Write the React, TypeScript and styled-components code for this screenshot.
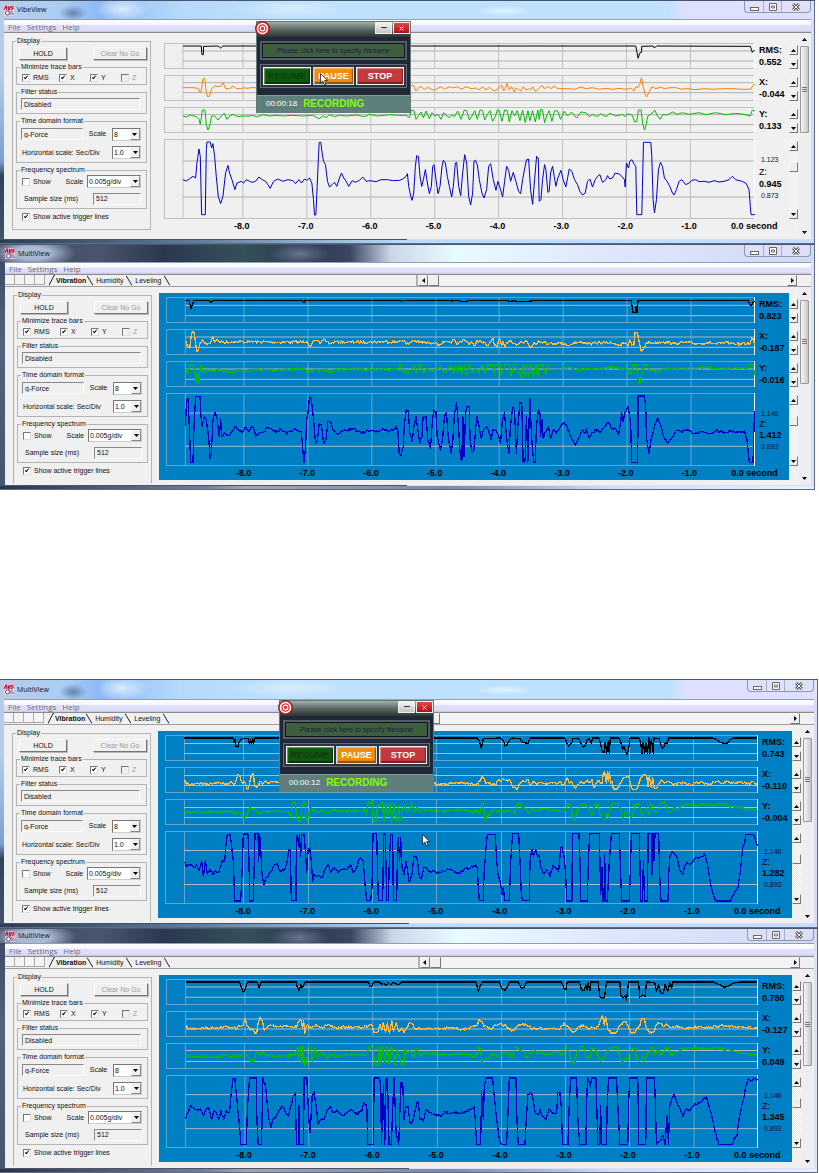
import React, { useId } from "react";
import styled, { createGlobalStyle, css } from "styled-components";

const UI = `"Liberation Sans", Arial, sans-serif`;
const CHROME = `"Open Sans", "Noto Sans", sans-serif`;

const Global = createGlobalStyle`
  *, *::before, *::after { box-sizing: border-box; }
  body { margin: 0; background: #fff; font-family: ${UI}; font-size: 7px; line-height: 8px; color: #111; }
  button, input, select { font: inherit; color: inherit; margin: 0; padding: 0; border-radius: 0; }
`;

/* ---------- recorded signals ---------- */

/* Samples come in three strips; each strip is "x,y x,y ..." from its own start. */
type Strips = [string, string, string];
const STRIP_START = [0, 750, 1620];

interface Band {
  name: string;
  value: string;
  color: string;
  top: number;
  height: number;
  lines: number[];
  data: Strips;
  limits?: [string, string];
}

interface Recording {
  x0: number;
  x1: number;
  start: number;
  grid: number[];
  fuzz: number;
  bands: Band[];
}

const vibe: Recording = {
  x0: 493, x1: 2268, start: 550, fuzz: 0,
  grid: [730, 922, 1114, 1306, 1498, 1690, 1882, 2074],
  bands: [
    { name: "RMS", value: "0.552", color: "#000", top: 130, height: 78, lines: [154, 184], data: [
      "550,139 605,139 607,165 611,165 612,140 655,139 663,145 670,139",
      "0,139 860,139",
      "0,139 290,139 297,176 302,160 307,158 308,140 342,139 346,145 352,139 634,140 640,158 648,150"] },
    { name: "X", value: "-0.044", color: "#ff8000", top: 227, height: 78, lines: [250, 280], data: [
      "550,265 580,265 595,267 602,280 606,270 609,240 615,236 620,280 624,292 630,290 636,268 645,260 662,262 670,250 678,268 690,268 700,260 710,268 725,268 735,265 745,268",
      "0,265 20,265 480,266 485,258 492,258 500,275 508,265 515,262 525,270 535,264 550,272 560,270 575,262 585,270 600,262 610,266 625,262 635,270 650,262 665,268 680,266 690,272 700,262 710,272 720,264 735,275 745,270 750,262 758,258 763,275 768,268 773,252 780,272 787,262 795,278 800,266 808,270 815,275 822,262 830,272 838,268 845,272 850,262 858,276 865,270",
      "0,265 8,258 15,268 25,262 35,268 45,260 55,268 75,268 90,268 105,270 125,263 140,268 160,265 180,270 200,267 220,270 240,267 262,270 275,266 284,275 290,262 296,265 302,255 307,235 312,262 318,285 322,293 330,278 338,262 350,268 365,263 375,268 395,265 410,265 430,270 445,267 465,271 500,268 520,270 550,268 580,268 610,270 630,270 636,268 642,258 648,255"] },
    { name: "Y", value: "0.133", color: "#00c000", top: 323, height: 78, lines: [346, 376], data: [
      "550,350 560,353 572,347 590,352 598,360 602,375 606,350 608,332 616,332 620,375 625,392 630,380 636,350 645,350 655,362 665,350 674,342 682,360 690,350 700,345 715,352 730,350",
      "0,350 10,348 20,353 40,346 60,350 80,348 100,350 130,348 160,350 190,348 208,358 222,350 230,355 240,346 255,352 270,348 290,350 320,347 345,352 360,345 385,350 420,346 450,348 470,348 480,355 486,332 494,334 500,360 508,348 515,338 522,356 530,335 540,358 548,340 556,350 565,345 575,360 583,340 590,348 600,355 608,346 615,352 625,335 635,360 645,332 652,334 660,362 668,350 676,334 684,360 692,332 700,334 706,362 714,345 722,334 730,366 738,352 744,332 750,334 758,366 766,332 774,334 780,368 788,334 796,350 804,334 812,364 820,332 828,370 836,334 842,364 850,334 858,368 866,332",
      "0,360 4,330 10,332 16,370 24,345 30,334 38,366 46,335 55,334 64,360 75,336 85,350 97,338 112,356 125,338 140,340 150,352 160,345 172,352 185,343 200,352 212,342 230,350 250,345 258,352 265,343 280,348 286,368 293,366 298,332 306,332 311,375 316,392 320,380 326,350 335,345 347,332 355,350 363,360 372,345 385,347 400,338 415,345 430,340 450,345 480,340 500,346 530,340 560,346 590,342 615,345 633,350 640,332 648,335"] },
    { name: "Z", value: "0.945", color: "#0000c8", top: 418, height: 240, lines: [484, 592], limits: ["1.123", "0.873"], data: [
      "550,540 560,544 570,537 580,530 588,535 592,490 598,448 602,470 606,645 617,645 620,450 622,427 632,427 636,445 640,432 645,470 650,530 656,590 663,612 670,590 678,520 685,497 690,520 697,540 706,570 712,550 725,545 732,550 740,540",
      "0,545 8,548 18,545 28,532 38,540 48,545 55,555 62,566 72,545 85,538 100,545 115,540 130,543 138,552 148,540 156,550 165,538 172,542 180,535 187,550 192,600 195,646 199,646 203,560 207,470 209,428 214,428 218,460 222,485 228,495 234,545 240,562 248,555 255,548 262,560 270,535 276,520 283,535 290,545 298,560 308,543 318,548 330,542 340,532 350,545 362,543 380,546 395,540 415,540 430,543 450,542 460,538 470,530 474,522 478,560 484,590 488,602 493,580 498,500 502,468 507,470 512,530 517,560 522,540 528,510 534,550 540,582 546,560 550,500 554,495 560,540 566,582 572,560 578,500 582,482 588,490 594,530 600,560 607,592 612,560 618,490 622,488 628,560 634,588 640,520 646,465 652,490 658,590 664,616 670,580 674,485 678,482 684,495 690,540 698,580 704,595 712,570 718,500 724,492 732,540 740,572 746,545 754,570 760,592 766,545 772,500 778,512 784,545 792,518 800,545 808,575 814,582 820,540 826,508 832,480 838,478 844,570 850,614 856,540 862,470 867,475",
      "0,605 5,600 10,540 16,495 20,510 26,578 30,575 34,520 40,500 45,530 50,560 56,535 65,512 72,540 80,562 86,530 90,508 98,515 106,540 115,555 122,575 130,586 138,580 145,545 152,538 160,562 168,540 175,530 182,525 190,548 200,540 205,528 212,538 220,535 228,520 240,523 248,530 256,540 258,562 262,490 268,505 272,485 278,480 284,492 290,500 293,645 308,645 310,560 313,428 335,428 338,470 342,600 346,640 352,600 358,510 364,488 370,500 376,535 384,545 392,560 400,580 405,586 412,570 420,545 428,540 440,555 450,550 458,542 470,540 480,546 495,545 510,548 525,543 540,547 555,545 570,540 580,530 590,540 600,543 610,545 622,552 630,570 634,620 636,645 648,645"] },
  ],
};

const multiA: Recording = {
  x0: 496, x1: 2264, start: 554, fuzz: 8,
  grid: [730, 922, 1114, 1306, 1496, 1688, 1880, 2072],
  bands: [
    { name: "RMS", value: "0.823", color: "#000", top: 171, height: 78, lines: [196, 227], data: [
      "554,181 565,181 571,205 577,190 578,181 625,181 630,187 640,181",
      "0,181 155,181 160,187 163,181 450,181 455,185 460,181 600,181 604,185 608,181 625,181 630,185 650,184 655,181 770,181 776,185 790,182 800,185 830,184 850,182 860,181",
      "0,181 272,181 278,218 285,218 287,200 290,218 293,181 622,181 632,198 642,182"] },
    { name: "X", value: "-0.187", color: "#ffb840", top: 268, height: 78, lines: [292, 323], data: [
      "554,305 562,320 567,325 573,280 580,278 585,310 588,335 593,333 598,312 605,300 612,310 628,312 636,290 642,308 650,300 660,308 700,306 745,307",
      "0,306 80,308 160,307 170,305 178,320 186,308 198,303 208,312 220,298 230,306 240,312 255,306 300,308 400,306 440,307 450,302 460,303 468,315 480,308 490,302 505,308 540,310 555,308 562,316 580,308 600,309 612,300 620,315 630,305 640,300 650,305 656,315 664,308 672,318 680,303 700,310 710,318 720,308 727,296 733,318 740,320 747,295 753,318 758,305 763,322 772,310 780,304 800,314 812,306 820,310 828,302 835,318 845,322 850,308 858,315 864,303",
      "0,306 15,307 25,312 50,310 75,312 85,318 100,309 130,308 150,313 180,309 220,311 240,316 255,310 262,320 268,300 274,316 280,318 284,278 291,278 296,305 303,335 310,325 320,308 340,310 370,306 400,312 430,308 470,312 500,309 530,313 560,309 590,313 620,312 630,311 634,295 640,298 643,320"] },
    { name: "Y", value: "-0.016", color: "#00c000", top: 364, height: 78, lines: [388, 419], data: [
      "554,390 562,400 570,374 578,376 583,400 586,425 590,400 594,430 600,378 604,380 608,398 618,396 628,390 640,395 650,388 665,395 680,392 695,398 710,390 740,395",
      "0,390 80,391 155,388 160,382 168,400 175,394 190,390 205,395 225,388 240,398 255,390 300,388 370,389 440,388 448,375 456,398 462,390 470,402 480,396 490,378 498,400 508,374 520,400 530,385 540,396 550,390 570,378 580,398 590,392 600,376 610,400 615,378 622,398 628,376 634,405 640,374 648,405 656,376 665,398 675,388 685,400 695,378 705,398 712,374 725,376 732,404 738,374 748,374 752,408 758,398 764,374 776,376 782,410 790,374 800,374 806,400 812,415 818,376 822,414 828,374 834,414 840,374 848,412 856,376 862,414 866,374",
      "0,374 8,376 16,400 24,374 30,392 50,388 90,384 110,390 140,386 170,388 200,384 230,382 245,390 258,386 268,405 274,395 278,374 288,376 290,400 295,430 300,428 304,400 310,376 320,374 328,390 340,396 355,398 365,388 400,386 440,387 500,384 560,388 600,386 620,387 630,374 637,376 643,405"] },
    { name: "Z", value: "1.412", color: "#0000c8", top: 460, height: 218, lines: [520, 619], limits: ["1.146", "0.893"], data: [
      "554,560 558,480 562,475 566,560 570,667 577,667 580,560 585,470 598,470 601,530 605,560 612,530 617,540 624,590 628,655 632,640 637,540 643,518 650,540 656,590 660,540 664,590 672,580 685,588 695,572 705,560 715,572 725,578 735,560 745,575",
      "0,566 4,560 8,562 15,588 28,578 40,575 52,562 70,575 90,570 110,580 130,568 145,575 152,575 156,620 160,668 165,620 168,540 172,520 177,470 182,478 188,530 195,610 200,605 206,552 212,555 220,612 226,600 232,545 240,545 248,570 260,582 280,572 308,568 335,580 350,570 375,578 400,568 415,575 430,568 437,560 442,575 446,640 452,645 458,620 462,550 467,510 473,512 478,580 485,605 490,560 496,530 502,570 508,610 514,590 518,530 526,530 532,600 540,625 546,540 550,510 556,515 560,590 570,630 576,600 582,530 588,520 594,600 602,640 607,600 612,520 618,490 624,560 630,655 634,665 637,530 641,650 645,520 650,500 656,500 659,600 664,635 670,630 676,560 680,530 686,560 692,595 700,570 708,560 715,575 722,600 728,568 735,570 745,590 750,610 756,540 762,520 768,590 775,640 780,560 786,505 792,510 798,640 802,560 808,490 814,490 818,665 824,660 828,530 832,667 838,475 844,600 850,667 854,667 858,560 864,510 868,515",
      "0,590 5,540 8,595 16,575 24,560 30,595 38,570 48,580 60,560 70,548 80,560 88,585 96,600 105,615 115,595 125,570 132,580 138,568 145,592 155,578 170,570 182,575 195,560 202,550 215,565 225,568 234,585 240,550 244,520 248,545 252,525 258,510 263,500 268,530 271,560 274,667 292,667 293,469 312,469 316,500 318,590 325,640 332,600 340,570 345,550 352,535 360,555 368,585 380,608 392,600 400,585 412,570 420,575 440,572 460,580 480,575 510,580 530,570 545,578 570,574 590,576 612,574 620,600 624,640 627,667 638,667 641,560 643,515"] },
  ],
};

const multiB: Recording = {
  x0: 493, x1: 2272, start: 551, fuzz: 8,
  grid: [728, 922, 1114, 1306, 1502, 1694, 1886, 2078],
  bands: [
    { name: "RMS", value: "0.743", color: "#000", top: 181, height: 78, lines: [205, 236], data: [
      "551,190 697,190 700,205 703,193 706,216 712,217 716,200 722,192 742,192 747,208 749,195",
      "3,206 6,192 9,206 12,190 550,190 680,190 686,200 692,220 698,192 750,190 758,200 764,214 770,208 778,195 785,190 808,192 815,203 825,205 832,206 838,190 860,190",
      "0,190 73,190 78,205 84,214 92,205 97,192 112,190 120,205 128,217 134,212 140,195 145,192 152,205 156,190 175,190 180,210 185,232 190,235 194,200 198,236 203,200 206,236 209,190 235,190 240,200 246,225 250,215 255,232 260,240 265,215 268,190 295,190 300,205 304,236 308,200 312,236 316,205 320,237 325,190 328,235 332,195 338,235 340,190 355,192 360,210 364,223 370,215 374,205 380,205 383,190 515,190 525,193 540,204 552,206 562,205 568,195 580,190 650,190"] },
    { name: "X", value: "-0.110", color: "#ffb840", top: 277, height: 78, lines: [301, 332], data: [
      "551,320 565,330 590,325 620,328 650,322 670,328 685,328 692,320 700,332 707,315 712,298 718,305 724,325 730,320 740,345 746,330",
      "0,310 4,298 8,296 12,335 20,338 28,320 35,330 45,318 55,325 65,322 85,323 200,322 400,326 550,326 580,328 620,324 660,328 680,327 688,320 694,303 700,310 705,325 712,322 722,330 735,332 742,318 755,315 765,318 778,317 785,335 792,336 798,345 806,328 820,320 830,314 840,330 850,322 860,330",
      "0,324 20,328 45,325 60,322 68,330 74,322 80,308 86,325 92,320 98,335 104,340 112,330 120,320 130,325 140,315 148,325 154,315 160,338 168,325 176,318 184,326 188,295 192,292 197,325 200,292 203,320 206,290 210,325 214,320 218,343 230,343 238,325 245,315 255,308 262,302 268,320 275,345 288,345 295,325 300,310 308,300 318,303 322,335 326,303 332,338 336,310 341,342 348,342 355,325 362,316 372,325 382,320 395,328 420,325 450,330 480,322 510,328 530,320 545,326 560,320 580,325 600,320 620,328 640,322 650,327"] },
    { name: "Y", value: "-0.004", color: "#00c000", top: 374, height: 78, lines: [398, 428], data: [
      "551,412 565,415 585,410 610,415 640,410 660,415 690,410 700,420 712,412 722,420 730,430 738,425 745,402",
      "0,400 15,408 25,420 35,412 55,410 80,408 95,412 115,411 120,432 124,390 128,384 134,385 138,430 142,440 150,440 153,400 158,386 163,386 167,440 172,430 178,400 190,410 205,415 215,405 230,415 250,408 280,412 310,408 335,412 342,402 348,420 352,388 358,384 365,386 368,440 378,440 380,395 388,390 395,386 400,440 406,388 412,425 418,388 424,440 430,386 438,440 444,395 448,440 455,405 462,390 470,412 478,402 485,388 492,415 500,398 508,415 515,405 540,408 580,410 620,406 660,410 682,408 688,418 694,385 698,390 703,432 710,425 718,424 725,408 745,412 770,410 785,405 792,420 800,385 808,388 815,400 825,405 835,418 845,402 855,410",
      "0,404 20,408 40,405 60,412 75,406 82,388 90,390 96,425 103,440 108,410 114,405 120,390 130,388 138,395 148,412 156,420 162,390 172,391 178,420 186,430 192,434 198,415 204,428 210,395 222,386 235,387 240,408 248,435 256,405 264,415 270,430 276,420 284,388 295,390 305,430 312,415 318,400 325,420 330,388 338,408 348,415 360,388 375,386 380,410 390,412 400,400 410,405 425,392 450,390 470,395 490,388 510,392 540,388 560,392 580,400 600,401 620,405 635,402 650,410"] },
    { name: "Z", value: "1.282", color: "#0000c8", top: 470, height: 219, lines: [529, 631], limits: ["1.146", "0.893"], data: [
      "551,565 560,575 572,570 580,580 588,570 595,590 603,560 608,605 614,560 620,600 628,585 636,600 645,590 655,592 665,560 672,560 676,510 680,480 688,480 692,505 698,560 702,680 720,680 724,600 728,479 742,479 745,560 747,680",
      "1,680 8,678 13,478 22,478 24,560 27,480 30,520 34,600 40,630 46,610 54,600 62,590 70,575 80,568 86,590 94,590 104,580 110,560 114,525 119,528 122,678 136,678 137,490 140,480 144,515 146,480 150,545 153,480 160,480 165,540 168,595 172,530 177,520 182,560 186,620 190,600 200,605 215,610 225,580 232,570 240,595 250,578 262,595 275,585 290,584 300,572 308,595 318,580 325,555 330,550 338,560 344,640 348,678 360,678 364,640 367,478 378,478 380,560 383,678 396,678 399,478 404,480 408,678 413,678 416,560 420,480 426,480 428,678 438,678 440,560 443,490 447,560 450,490 454,580 460,600 466,560 476,625 484,600 490,545 498,546 505,600 512,615 520,580 530,585 540,595 550,588 560,598 575,588 595,587 610,590 625,598 640,585 660,580 675,572 680,580 683,640 686,678 698,678 700,600 706,520 710,480 734,480 738,560 742,600 748,620 754,660 758,640 762,678 776,678 780,560 786,478 804,478 808,560 812,660 815,678 836,678 838,560 844,525 848,545 855,525 860,545 866,545",
      "0,580 10,598 18,585 28,608 36,575 45,580 54,590 60,520 64,515 70,545 75,600 78,680 94,680 95,478 115,478 118,560 120,680 140,680 143,560 146,500 148,478 176,478 180,660 184,580 186,680 190,680 192,540 195,680 200,680 203,620 206,560 212,478 236,478 240,600 243,680 266,680 270,560 272,478 296,478 300,680 306,680 308,560 312,680 321,680 322,478 332,478 334,600 337,478 340,560 343,478 354,478 357,600 361,680 382,680 384,600 388,545 394,530 402,540 410,550 418,590 426,600 432,575 440,565 450,570 460,555 475,548 492,540 498,560 505,600 512,640 520,665 525,680 570,680 575,665 586,650 592,640 598,600 606,520 612,505 616,480 638,480 644,495 651,515"] },
  ],
};

const multiC: Recording = {
  x0: 497, x1: 2275, start: 556, fuzz: 8,
  grid: [734, 926, 1118, 1312, 1505, 1697, 1889, 2083],
  bands: [
    { name: "RMS", value: "0.780", color: "#000", top: 178, height: 77, lines: [202, 232], data: [
      "556,187 718,187 724,205 730,217 736,205 742,187 749,187",
      "20,187 27,204 33,187 138,187 142,205 147,213 152,195 155,205 160,198 165,187 355,187 360,200 367,198 370,187 390,187 395,195 400,188 408,197 415,188 422,195 430,188 445,195 455,187 678,187 685,215 692,195 698,187 748,187 755,205 765,212 773,200 778,187 805,187 815,205 822,203 830,187 860,187",
      "0,187 65,187 72,205 78,210 82,187 118,187 125,210 132,213 138,195 142,212 145,190 150,213 152,187 175,187 180,230 188,235 194,232 200,187 240,187 243,225 250,235 255,228 260,240 266,187 296,187 300,232 308,225 316,230 320,187 345,188 350,215 356,195 362,218 370,222 376,195 384,215 390,190 396,205 398,187 520,187 540,195 552,202 565,200 580,190 600,187 653,187"] },
    { name: "X", value: "-0.127", color: "#ffb840", top: 274, height: 78, lines: [298, 328], data: [
      "556,320 565,328 590,326 630,325 670,322 700,323 708,330 715,318 722,320 728,318 735,298 742,320 749,330",
      "0,331 8,328 14,340 20,335 24,310 30,293 38,310 42,332 48,325 60,316 80,320 105,318 120,322 140,321 146,305 152,300 157,325 160,302 164,340 170,318 185,325 200,316 215,322 240,318 260,325 290,322 330,324 355,320 360,315 366,318 372,338 382,338 390,315 395,332 400,308 406,338 412,310 418,340 425,302 430,335 438,310 445,335 455,325 462,338 470,325 478,308 488,312 495,328 520,326 560,327 600,325 640,328 675,322 682,318 687,299 696,305 702,320 712,322 722,330 735,316 755,313 765,316 775,325 785,335 795,330 805,318 820,312 835,320 845,330 860,326",
      "0,324 20,328 40,325 60,326 72,310 80,320 90,325 100,338 112,325 130,316 140,322 148,330 155,320 165,325 175,320 182,300 188,288 194,318 197,290 204,328 215,340 228,340 235,325 245,312 258,305 268,328 275,342 285,340 292,325 300,320 306,296 314,296 320,325 330,340 342,338 348,318 355,308 362,312 370,320 380,312 390,322 400,321 440,326 480,320 510,325 540,318 570,322 610,320 640,326 653,325"] },
    { name: "Y", value: "0.049", color: "#00c000", top: 370, height: 79, lines: [394, 425], data: [
      "556,410 570,412 600,410 640,412 680,408 720,412 738,405 745,415",
      "2,428 12,425 18,400 25,398 32,408 38,395 45,405 55,408 80,410 110,408 135,409 140,385 145,420 150,380 155,430 158,380 164,438 170,430 173,380 180,385 186,425 194,385 200,410 210,400 222,402 230,418 240,408 270,409 300,405 330,408 350,405 355,390 362,380 370,390 373,438 384,438 386,380 393,430 398,380 404,430 410,382 417,432 424,380 430,400 434,438 440,390 448,410 455,438 462,436 466,385 472,405 480,390 488,415 500,388 510,412 520,400 560,404 600,406 650,402 672,412 680,405 686,380 692,395 696,430 705,420 715,418 725,405 745,410 765,400 778,402 785,415 792,395 800,382 812,395 822,400 832,415 842,400 850,388 860,402",
      "0,402 20,405 45,395 60,400 66,410 72,390 80,382 88,395 94,420 100,432 106,425 112,395 120,382 130,380 140,415 150,412 155,384 165,388 172,405 182,425 190,415 200,400 210,385 225,382 235,384 240,415 248,430 256,415 262,425 268,400 275,385 285,388 292,420 300,425 308,410 315,425 322,405 330,395 338,382 346,405 355,390 365,410 378,382 388,390 395,410 405,395 420,394 440,386 470,385 500,388 530,384 560,390 590,398 620,402 650,405"] },
    { name: "Z", value: "1.345", color: "#0000c8", top: 467, height: 219, lines: [526, 628], limits: ["1.146", "0.893"], data: [
      "556,600 562,580 570,560 578,565 585,570 592,572 600,568 610,590 616,570 625,565 634,600 640,575 648,580 655,600 662,575 670,600 678,575 688,580 692,530 698,478 704,478 710,540 716,600 722,676 738,676 742,560 748,476",
      "0,476 18,476 20,600 24,676 34,676 37,520 38,476 46,500 50,545 56,600 62,625 68,600 78,590 88,570 98,562 106,580 115,590 122,560 130,530 135,520 139,676 144,676 146,560 149,676 160,676 162,476 170,476 176,600 180,640 186,530 192,518 198,560 204,615 212,600 222,601 230,575 240,562 250,580 260,572 275,588 290,580 305,572 320,585 335,575 342,550 350,560 353,676 370,676 372,476 388,476 392,500 394,676 400,500 404,676 408,480 412,476 417,676 424,676 428,560 432,476 438,640 446,676 450,560 453,490 458,490 462,600 468,560 474,561 480,610 488,605 496,570 504,545 510,600 520,605 528,570 540,580 550,585 570,590 585,578 600,582 625,580 640,582 660,570 672,562 676,600 680,676 692,676 695,520 700,600 703,500 708,476 728,476 734,540 740,600 748,660 755,676 770,676 775,560 778,476 798,476 801,600 805,676 825,676 829,600 834,525 840,520 848,530 855,575 866,588",
      "0,570 8,590 18,600 28,570 40,580 50,581 54,520 60,520 64,560 68,676 84,676 88,560 92,476 110,476 114,600 120,676 138,676 140,560 143,476 152,500 155,476 168,476 172,600 174,676 180,676 182,560 186,676 200,676 202,560 206,476 230,476 234,560 240,676 264,676 266,560 270,476 294,476 297,676 318,676 320,476 344,476 347,560 350,676 370,650 376,676 382,590 386,676 390,560 396,540 403,525 412,550 422,570 430,592 438,570 450,575 460,560 475,550 490,540 500,532 508,560 516,590 524,630 532,660 538,676 578,676 584,655 592,650 598,600 606,560 612,540 618,500 626,478 634,485 645,478 653,480"] },
  ],
};

/* Joins the strips and roughens sloping stretches with repeatable noise. */
function tracePath(data: Strips, fuzz: number) {
  let seed = 7;
  const noise = () => {
    seed = (seed * 16807) % 2147483647;
    return seed / 2147483647 - 0.5;
  };
  const pts = data.flatMap((strip, i) =>
    strip.split(" ").map((p) => {
      const [x, y] = p.split(",").map(Number);
      return [x + STRIP_START[i], y];
    })
  );
  let d = `M${pts[0][0]} ${pts[0][1]}`;
  for (let i = 1; i < pts.length; i++) {
    const [ax, ay] = pts[i - 1];
    const [bx, by] = pts[i];
    if (fuzz && ay !== by && bx - ax > 5) {
      for (let x = ax + 3; x < bx - 1; x += 3) {
        const y = ay + ((by - ay) * (x - ax)) / (bx - ax) + noise() * fuzz;
        d += `L${x} ${y.toFixed(1)}`;
      }
    }
    d += `L${bx} ${by}`;
  }
  return d;
}

/* ---------- window frame ---------- */

type Skin = "sky" | "night";

const Page = styled.main`
  display: flex;
  flex-direction: column;
  width: 100%;
`;

const Pair = styled.section<{ $right: number }>`
  display: flex;
  flex-direction: column;
  margin-right: ${(p) => p.$right}px;
  & + & { margin-top: 189px; }
`;

const skyTitle = css`
  background:
    radial-gradient(ellipse 14px 8px at 73px 12px, #57719bcc, transparent),
    radial-gradient(ellipse 26px 12px at 122px 8px, #e8f6ffcc, transparent),
    radial-gradient(ellipse 60px 9px at 290px 8px, #d9f0f8cc, transparent),
    radial-gradient(ellipse 30px 5px at 505px 10px, #e4faffcc, transparent),
    linear-gradient(90deg, #b9cbe6 0, #a9cdf4 8%, #8fb9f5 12%, #b5d9fb 22%, #bfe0ff 36%, #bfe0ff 82%, #dfdfff 84%, #dfdfff 100%);
`;
const nightTitle = css`
  background:
    radial-gradient(ellipse 44px 16px at 32px 8px, #a9b8d4 40%, transparent),
    radial-gradient(ellipse 30px 12px at 300px 9px, #77829fcc, transparent),
    linear-gradient(90deg, #3c465c 0, #4b566e 12%, #2b3850 20%, #35505a 30%, #2c3850 38%, #3c4662 43%, #c9d6e8 48%, #e8fbff 56%, #dfe6fb 75%, #d3d8f4 100%);
`;

const Frame = styled.article<{ $skin: Skin; $edge: number }>`
  position: relative;
  border-top: 1px solid #48566e;
  padding: 0 4px 5px ${(p) => p.$edge}px;
  background: ${(p) =>
    p.$skin === "sky"
      ? "linear-gradient(90deg, #2c3c54 0, #62809e 25%, #b9dcfb 50%, #c9dcff 100%) bottom / 100% 4px no-repeat, linear-gradient(90deg, transparent 50%, #d5dcfa 50%), linear-gradient(#b5ccec 30%, #7da0cf 66%, #33405a 72%, #43536c)"
      : "linear-gradient(90deg, #2a3348 0, #777e90 25%, #a9a2a8 30%, #7a8aa8 55%, #d5dcf6 75%, #e9efff 100%) bottom / 100% 4px no-repeat, linear-gradient(90deg, transparent 50%, #dbe0f8 50%), linear-gradient(#3c4862, #54627c 40%, #465670)"};
  box-shadow: inset -1px -1px 0 #5d6c84;
`;

const TitleBar = styled.header<{ $skin: Skin; $height: number; $edge: number }>`
  display: flex;
  justify-content: space-between;
  height: ${(p) => p.$height}px;
  margin: 0 -3px 0 -${(p) => p.$edge}px;
  padding: 0 3px 0 ${(p) => p.$edge}px;
  font: 7px/${(p) => p.$height - 2}px ${CHROME};
  color: #101018;
  ${(p) => (p.$skin === "sky" ? skyTitle : nightTitle)}
`;

const Caption = styled.h1`
  display: flex;
  align-items: center;
  gap: 3px;
  margin: 0;
  font: inherit;
`;

const CaptionButtons = styled.div`
  display: flex;
  height: 12px;
  border: 1px solid #8c98b4;
  border-top: 0;
  border-radius: 0 0 4px 4px;
  background: #dfe2f6aa;
  overflow: hidden;
`;

const CaptionButton = styled.button<{ $wide?: boolean }>`
  width: ${(p) => (p.$wide ? 29 : 18)}px;
  border: 0;
  border-left: 1px solid #a5b0c8;
  background: none;
  display: grid;
  place-items: center;
  &:first-child { border-left: 0; }
`;

const MenuBar = styled.nav<{ $height: number }>`
  display: flex;
  gap: 6px;
  height: ${(p) => p.$height}px;
  padding-left: 4px;
  border-top: 1px solid #8fa0b0;
  border-bottom: 1px solid #8a8a90;
  background: linear-gradient(#fff 0, #f4f6fb 40%, #dfdffb 45%, #dfdffb 80%, #c8c8d4 100%);
`;

const MenuItem = styled.button`
  border: 0;
  background: none;
  font: 8px/11px ${CHROME};
  color: #6c6c74;
`;

const TabStrip = styled.div`
  display: flex;
  height: 12px;
  background: #f0f0f0;
  border-bottom: 1px solid #a0a0a0;
`;

const TabSide = styled.div`
  flex: 0 0 51%;
  display: flex;
`;

const NavCell = styled.button`
  width: 10px;
  height: 10px;
  border: 0;
  border-right: 1px solid #a8a8a8;
  border-bottom: 1px solid #a8a8a8;
  background: #f4f4f4;
`;

const TabList = styled.div`
  display: flex;
  gap: 1px;
  margin-left: 4px;
`;

const Tab = styled.button<{ $active?: boolean }>`
  display: flex;
  align-items: center;
  gap: 1px;
  height: 11px;
  border: 0;
  background: none;
  font-weight: ${(p) => (p.$active ? "bold" : "normal")};
`;

const HScroll = styled.div`
  flex: 1;
  display: flex;
  height: 11px;
  margin-right: 14px;
  border-left: 2px solid #b0b0b0;
  background: repeating-conic-gradient(#fff 0 25%, #eaeaea 0 50%) 0 0 / 2px 2px;
`;

const Bevel = styled.button<{ $w?: number; $h?: number }>`
  width: ${(p) => p.$w ?? 9}px;
  height: ${(p) => p.$h ?? 10}px;
  flex: none;
  display: grid;
  place-items: center;
  border: 1px solid;
  border-color: #f6f6f6 #777 #777 #f6f6f6;
  background: #efefef;
`;

const LevelThumb = styled(Bevel)`
  margin-top: 11px;
`;

const Spacer = styled.span`
  flex: 1;
`;

const Client = styled.div`
  display: flex;
  padding: 0 2px 0 8px;
  background: #f0f0f0;
  overflow: hidden;
`;

/* ---------- settings panel ---------- */

const Group = styled.fieldset<{ $open?: boolean }>`
  margin: 0;
  padding: 0;
  min-width: 0;
  border: 1px solid #b4b4b4;
  ${(p) => p.$open && "border-bottom-color: transparent;"}
`;

const Legend = styled.legend`
  margin-left: 3px;
  padding: 0 1px;
  line-height: 8px;
`;

const Settings = styled.form<{ $height: number }>`
  flex: 0 0 139px;
  height: ${(p) => p.$height}px;
  padding-top: 4px;
`;

const Stack = styled.div`
  display: flex;
  flex-direction: column;
  gap: 3px;
  padding: 2px 3px 5px;
`;

const Row = styled.div<{ $h: number; $pad?: number }>`
  display: flex;
  align-items: center;
  justify-content: space-between;
  height: ${(p) => p.$h}px;
  padding: 0 5px 0 ${(p) => p.$pad ?? 4}px;
`;

const ButtonRow = styled.div`
  display: flex;
  justify-content: space-between;
  padding-left: 3px;
`;

const PushButton = styled.button<{ $w: number }>`
  width: ${(p) => p.$w}px;
  height: 13px;
  border: 1px solid;
  border-color: #fafafa #777 #777 #fafafa;
  background: #f0f0f0;
  box-shadow: 1px 1px 0 #b8b8b8;
  &:disabled { color: #9a9a9a; }
`;

const CheckLabel = styled.label<{ $off?: boolean }>`
  display: inline-flex;
  align-items: center;
  gap: 3px;
  color: ${(p) => (p.$off ? "#a0a0a0" : "#111")};
`;

const Tick = styled.input`
  appearance: none;
  position: relative;
  width: 8px;
  height: 8px;
  border: 1px solid;
  border-color: #777 #ddd #ddd #777;
  background: #fff;
  &:disabled { background: #f0f0f0; }
  &:checked::after {
    content: "";
    position: absolute;
    left: 2px;
    top: 0;
    width: 2px;
    height: 4px;
    border: solid #000;
    border-width: 0 1px 1px 0;
    transform: rotate(40deg);
  }
`;

const Checks = styled.div`
  display: grid;
  grid-template-columns: 37px 31px 31px 20px;
  align-items: center;
  height: 13px;
  padding-left: 5px;
`;

const Sunken = styled.input<{ $w: string }>`
  width: ${(p) => p.$w};
  height: 12px;
  padding: 0 2px;
  border: 1px solid;
  border-color: #888 #fafafa #fafafa #888;
  background: #f0f0f0;
  line-height: 10px;
  outline: 0;
`;

const SelectBox = styled.span<{ $w: number }>`
  position: relative;
  display: inline-flex;
  width: ${(p) => p.$w}px;
  height: 13px;
  border: 1px solid;
  border-color: #777 #ccc #ccc #777;
  background: #fff;
  select {
    flex: 1;
    min-width: 0;
    padding-left: 1px;
    border: 0;
    background: none;
    appearance: none;
    line-height: 11px;
    outline: 0;
  }
`;

const Arrow = styled.span`
  display: grid;
  place-items: center;
  width: 10px;
  border: 1px solid;
  border-color: #f6f6f6 #888 #888 #f6f6f6;
  background: #efefef;
  pointer-events: none;
`;

const Filter = styled.div`
  height: 17px;
  padding: 2px 6px 0 4px;
`;

const LastRow = styled.div`
  padding: 1px 0 1px 6px;
`;

/* ---------- chart ---------- */

const Chart = styled.div<{ $blue: boolean }>`
  flex: 1;
  min-width: 0;
  align-self: flex-start;
  display: flex;
  flex-direction: column;
  gap: 6px;
  margin: 6px 0 0 7px;
  padding: 4px 0 0 ${(p) => (p.$blue ? 7 : 6)}px;
  background: ${(p) => (p.$blue ? "#0080c4" : "transparent")};
`;

const BandRow = styled.div<{ $h: number }>`
  display: flex;
  height: ${(p) => p.$h}px;
  svg { flex: 1; min-width: 0; height: 100%; }
`;

const Readout = styled.dl<{ $tall: boolean; $lh: number }>`
  flex: 0 0 34px;
  margin: 0;
  padding: ${(p) => (p.$tall ? 15 : 1)}px 0 0 4px;
  font: 9px/${(p) => p.$lh}px ${UI};
  color: #000;
  dt { font-weight: ${(p) => (p.$tall ? "normal" : "bold")}; }
  dd { margin: 0; font-weight: bold; white-space: nowrap; }
`;

const Limit = styled.div`
  padding-left: 2px;
  font-size: 7px;
  color: #10102c;
`;

const Axis = styled.div`
  display: grid;
  grid-template-columns: 46fr repeat(8, 64fr) 34fr 34px;
  margin-top: -6px;
  font: bold 9px/14px ${UI};
  color: #000;
  text-align: center;
`;

const AxisEnd = styled.span`
  grid-column: 10 / 12;
  padding-left: 10px;
  text-align: left;
  white-space: nowrap;
`;

const Spins = styled.div`
  flex: 0 0 9px;
  display: flex;
  flex-direction: column;
  gap: 6px;
  padding-top: 10px;
`;

const SpinPair = styled.div<{ $h: number; $track?: boolean }>`
  display: flex;
  flex-direction: column;
  justify-content: space-between;
  height: ${(p) => p.$h}px;
  padding-top: 2px;
  ${(p) => p.$track && "background: repeating-conic-gradient(#fff 0 25%, #e8e8e8 0 50%) 0 0 / 2px 2px;"}
`;

const VScroll = styled.div`
  flex: 0 0 10px;
  display: flex;
  flex-direction: column;
  align-items: center;
  margin-left: 1px;
  padding: 4px 0;
  background: #eeeef0;
`;

const VThumb = styled.span`
  flex: 0 0 44%;
  width: 9px;
  margin: 4px 0 auto;
  display: grid;
  place-items: center;
  border: 1px solid #9a9a9a;
  border-radius: 1px;
  background: linear-gradient(90deg, #f4f4f4, #dcdcdc 60%, #c4c4c4);
`;

/* ---------- recorder dialog ---------- */

const Recorder = styled.section<{ $left: number; $top: number }>`
  position: absolute;
  left: ${(p) => p.$left}px;
  top: ${(p) => p.$top}px;
  width: 155px;
  border: 1px solid #65787a;
  background: #202836;
`;

const RecorderTitle = styled.header`
  display: flex;
  justify-content: flex-end;
  gap: 1px;
  height: 15px;
  background: linear-gradient(#9fb0aa, #55625f 55%, #2a3634);
`;

const Target = styled.svg`
  position: absolute;
  left: -2px;
  top: -1px;
`;

const MiniButton = styled.button<{ $red?: boolean }>`
  width: 17px;
  height: 12px;
  display: grid;
  place-items: center;
  border: 1px solid #eee;
  background: ${(p) => (p.$red ? "linear-gradient(#e04840, #a81418)" : "linear-gradient(#f4f4f4, #c4c4c4)")};
`;

const FileButton = styled.button`
  display: block;
  width: calc(100% - 6px);
  height: 19px;
  margin: 4px 3px;
  border: 2px solid #555c68;
  outline: 1px solid #0e141e;
  outline-offset: -3px;
  background: #3e5f3e;
  font-size: 7px;
  color: #221a44;
`;

const Deck = styled.div`
  display: grid;
  grid-template-columns: 49fr 42fr 49fr;
  gap: 2px;
  margin: 4px 3px 7px;
  padding: 2px;
  border: 1px solid #666d78;
  background: #2c333f;
`;

const decks = {
  resume: ["#0e5a0c", "#123c10", "#f2f2f2"],
  pause: ["#f08c10", "#fff", "#bfe0ff"],
  stop: ["#c23a3c", "#fff", "#f2f2f2"],
};
const DeckButton = styled.button<{ $kind: keyof typeof decks }>`
  height: 18px;
  border: 1px solid ${(p) => decks[p.$kind][2]};
  box-shadow: inset 1px 1px 1px #ffffff66, inset -1px -2px 1px #00000066;
  background: ${(p) => decks[p.$kind][0]};
  color: ${(p) => decks[p.$kind][1]};
  font: bold 9px/14px ${UI};
`;

const RecorderStatus = styled.footer`
  display: flex;
  align-items: center;
  gap: 6px;
  height: 17px;
  padding-left: 9px;
  border-top: 1px solid #8a9c98;
  background: #5f7f7c;
  color: #fff;
  font: 8px/16px ${UI};
  strong { font-size: 10px; color: #80ff00; }
`;

const Pointer = styled.svg<{ $left: number; $top: number }>`
  position: absolute;
  left: ${(p) => p.$left}px;
  top: ${(p) => p.$top}px;
`;

/* ---------- pieces ---------- */

const Tri = ({ dir }: { dir: "up" | "down" | "left" | "right" }) => {
  const d = { up: "M0 4L2.5 1L5 4Z", down: "M0 1L2.5 4L5 1Z", left: "M4 0L1 2.5L4 5Z", right: "M1 0L4 2.5L1 5Z" }[dir];
  return (
    <svg width="5" height="5" viewBox="0 0 5 5" aria-hidden="true">
      <path d={d} fill="#000" />
    </svg>
  );
};

const AppIcon = () => (
  <svg width="10" height="11" viewBox="0 0 10 11" aria-hidden="true">
    <rect width="10" height="11" fill="#f3dbe4" opacity=".7" />
    <path d="M0 5L2 1L3 5M4 1L5 5L6.500 1M9.500 1L7.500 2L9 3.500L7 5" stroke="#c0143c" strokeWidth="1.200" fill="none" />
    <circle cx="3.500" cy="8" r="2" stroke="#5a4670" fill="#fff" />
    <path d="M6 7H9M6 9H10" stroke="#8a6a8c" />
  </svg>
);

const Drop = ({ id, width, value }: { id: string; width: number; value: string }) => (
  <SelectBox $w={width}>
    <select id={id} defaultValue={value}>
      <option>{value}</option>
    </select>
    <Arrow><Tri dir="down" /></Arrow>
  </SelectBox>
);

function Panel({ height, open }: { height: number; open: boolean }) {
  const id = useId();
  return (
    <Settings $height={height} onSubmit={(e) => e.preventDefault()}>
      <Group $open={open}>
        <Legend>Display</Legend>
        <Stack>
          <ButtonRow>
            <PushButton type="button" $w={48}>HOLD</PushButton>
            <PushButton type="button" $w={54} disabled>Clear No Go</PushButton>
          </ButtonRow>
          <Group>
            <Legend>Minimize trace bars</Legend>
            <Checks>
              <CheckLabel><Tick type="checkbox" defaultChecked />RMS</CheckLabel>
              <CheckLabel><Tick type="checkbox" defaultChecked />X</CheckLabel>
              <CheckLabel><Tick type="checkbox" defaultChecked />Y</CheckLabel>
              <CheckLabel $off><Tick type="checkbox" disabled />Z</CheckLabel>
            </Checks>
          </Group>
          <Group>
            <Legend>Filter status</Legend>
            <Filter><Sunken aria-label="Filter status" $w="100%" readOnly value="Disabled" /></Filter>
          </Group>
          <Group>
            <Legend>Time domain format</Legend>
            <Row $h={18}>
              <Sunken aria-label="Time domain format" $w="62px" readOnly value="g-Force" />
              <label htmlFor={`${id}s`}>Scale</label>
              <Drop id={`${id}s`} width={29} value="8" />
            </Row>
            <Row $h={19} $pad={5}>
              <label htmlFor={`${id}h`}>Horizontal scale: Sec/Div</label>
              <Drop id={`${id}h`} width={29} value="1.0" />
            </Row>
          </Group>
          <Group>
            <Legend>Frequency spectrum</Legend>
            <Row $h={15} $pad={5}>
              <CheckLabel><Tick type="checkbox" />Show</CheckLabel>
              <Spacer />
              <label htmlFor={`${id}f`}>Scale&nbsp;&nbsp;</label>
              <Drop id={`${id}f`} width={54} value="0.005g/div" />
            </Row>
            <Row $h={19} $pad={7}>
              <label htmlFor={`${id}n`}>Sample size (ms)</label>
              <Sunken id={`${id}n`} $w="48px" readOnly value="512" />
            </Row>
          </Group>
          <LastRow>
            <CheckLabel><Tick type="checkbox" defaultChecked />Show active trigger lines</CheckLabel>
          </LastRow>
        </Stack>
      </Group>
    </Settings>
  );
}

function Plot({ rec, band, blue }: { rec: Recording; band: Band; blue: boolean }) {
  const line = blue ? "#62a6cc" : "#c0c0c0";
  const strong = blue ? "#a9bcc8" : "#b0b0b0";
  const bottom = band.top + band.height;
  return (
    <svg
      viewBox={`${rec.x0} ${band.top} ${rec.x1 - rec.x0} ${band.height}`}
      preserveAspectRatio="none"
      shapeRendering="crispEdges"
      role="img"
      aria-label={`${band.name} trace`}
    >
      <g stroke={line} strokeWidth="3" fill="none">
        <path d={`M${rec.x0 + 1.5} ${bottom}V${band.top + 1.5}H${rec.x1}M${rec.x0} ${bottom - 1.5}H${rec.x1}M${rec.start} ${band.top}V${bottom}`} />
        {rec.grid.map((x) => <path key={x} d={`M${x} ${band.top}V${bottom}`} />)}
        <path stroke={strong} d={`M${rec.start} ${band.lines[0]}H${rec.x1}M${rec.start} ${band.lines[1]}H${rec.x1}`} />
        <path stroke="#fff" d={`M${rec.x1 - 1.5} ${band.top}V${bottom}`} />
      </g>
      <path d={tracePath(band.data, band.name === "RMS" ? 0 : rec.fuzz)} fill="none" stroke={band.color} strokeWidth={blue ? 4 : 3} strokeLinejoin="round" />
    </svg>
  );
}

function ChartArea({ rec, blue }: { rec: Recording; blue: boolean }) {
  const zh = blue ? 73 : 80;
  return (
    <>
      <Chart $blue={blue}>
        {rec.bands.map((b) => (
          <BandRow key={b.name} $h={b.limits ? zh : 26}>
            <Plot rec={rec} band={b} blue={blue} />
            <Readout $tall={!!b.limits} $lh={b.limits && blue ? 11 : 12}>
              {b.limits && <Limit>{b.limits[0]}</Limit>}
              <dt>{b.name}:</dt>
              <dd>{b.value}</dd>
              {b.limits && <Limit>{b.limits[1]}</Limit>}
            </Readout>
          </BandRow>
        ))}
        <Axis>
          <span />
          {[8, 7, 6, 5, 4, 3, 2, 1].map((n) => <span key={n}>-{n}.0</span>)}
          <AxisEnd>0.0 second</AxisEnd>
        </Axis>
      </Chart>
      <Spins>
        {["RMS", "X", "Y"].map((n) => (
          <SpinPair key={n} $h={26}>
            <Bevel aria-label={`${n} up`}><Tri dir="up" /></Bevel>
            <Bevel aria-label={`${n} down`}><Tri dir="down" /></Bevel>
          </SpinPair>
        ))}
        <SpinPair $h={zh} $track>
          <Bevel aria-label="Z up"><Tri dir="up" /></Bevel>
          <LevelThumb aria-label="Z level" />
          <Spacer />
          <Bevel aria-label="Z down"><Tri dir="down" /></Bevel>
        </SpinPair>
      </Spins>
      <VScroll>
        <Tri dir="up" />
        <VThumb>
          <svg width="5" height="5" viewBox="0 0 5 5" aria-hidden="true"><path d="M0 .5H5M0 2.500H5M0 4.500H5" stroke="#777" /></svg>
        </VThumb>
        <Tri dir="down" />
      </VScroll>
    </>
  );
}

const Slant = ({ back }: { back?: boolean }) => (
  <svg width="6" height="11" viewBox="0 0 6 11" aria-hidden="true">
    <path d={back ? "M0 .5L6 10.500" : "M0 10.500L5 .5H6"} stroke="#222" fill="none" />
  </svg>
);

function Tabs() {
  return (
    <TabStrip>
      <TabSide>
        {[1, 2, 3, 4].map((n) => <NavCell key={n} aria-label={`Sheet scroll ${n}`} />)}
        <TabList role="tablist">
          <Tab role="tab" aria-selected $active><Slant />Vibration<Slant back /></Tab>
          <Tab role="tab">&nbsp;Humidity&nbsp;<Slant back /></Tab>
          <Tab role="tab">&nbsp;Leveling&nbsp;<Slant back /></Tab>
        </TabList>
      </TabSide>
      <HScroll>
        <Bevel $w={10} $h={11} aria-label="Scroll left"><Tri dir="left" /></Bevel>
        <Bevel $w={11} $h={11} aria-label="Scroll thumb" />
        <Spacer />
        <Bevel $w={10} $h={11} aria-label="Scroll right"><Tri dir="right" /></Bevel>
      </HScroll>
    </TabStrip>
  );
}

interface WindowProps {
  title: string;
  skin: Skin;
  edge: number;
  bar: number;
  menu: number;
  client: number;
  rec: Recording;
  tabs?: boolean;
  children?: React.ReactNode;
}

function AppWindow({ title, skin, edge, bar, menu, client, rec, tabs = false, children }: WindowProps) {
  return (
    <Frame $skin={skin} $edge={edge}>
      <TitleBar $skin={skin} $height={bar} $edge={edge}>
        <Caption><AppIcon />{title}</Caption>
        <CaptionButtons>
          <CaptionButton aria-label="Minimize">
            <svg width="9" height="8" viewBox="0 0 9 8"><rect x=".5" y="4.500" width="8" height="3" fill="#fff" stroke="#666" /></svg>
          </CaptionButton>
          <CaptionButton aria-label="Maximize">
            <svg width="8" height="8" viewBox="0 0 8 8"><path d="M.5 .5H7.500V7.500H.5ZM2.500 3H5.500V5H2.500Z" fill="#fff" stroke="#666" /></svg>
          </CaptionButton>
          <CaptionButton aria-label="Close" $wide>
            <svg width="8" height="8" viewBox="0 0 8 8"><path d="M1 1L7 7M7 1L1 7" stroke="#555" strokeWidth="3" /><path d="M1 1L7 7M7 1L1 7" stroke="#fff" /></svg>
          </CaptionButton>
        </CaptionButtons>
      </TitleBar>
      <MenuBar $height={menu}>
        <MenuItem>File</MenuItem>
        <MenuItem>Settings</MenuItem>
        <MenuItem>Help</MenuItem>
      </MenuBar>
      {tabs && <Tabs />}
      <Client>
        <Panel height={client} open={tabs} />
        <ChartArea rec={rec} blue={tabs} />
      </Client>
      {children}
    </Frame>
  );
}

function RecorderDialog({ left, top, time }: { left: number; top: number; time: string }) {
  return (
    <Recorder $left={left} $top={top}>
      <RecorderTitle>
        <Target width="15" height="15" viewBox="0 0 15 15" aria-hidden="true">
          <circle cx="7.500" cy="7.500" r="7" fill="#d03030" stroke="#8c1c1c" />
          <circle cx="7.500" cy="7.500" r="5" fill="none" stroke="#fff" strokeWidth="1.500" />
          <circle cx="7.500" cy="7.500" r="2.300" fill="#d03030" stroke="#fff" strokeWidth="1.300" />
        </Target>
        <MiniButton aria-label="Minimize">
          <svg width="6" height="2" viewBox="0 0 6 2"><rect width="6" height="1" fill="#333" /></svg>
        </MiniButton>
        <MiniButton aria-label="Close" $red>
          <svg width="5" height="5" viewBox="0 0 5 5"><path d="M.5 .5L4.500 4.500M4.500 .5L.5 4.500" stroke="#fff" /></svg>
        </MiniButton>
      </RecorderTitle>
      <FileButton>Please click here to specify filename</FileButton>
      <Deck>
        <DeckButton $kind="resume">RESUME</DeckButton>
        <DeckButton $kind="pause">PAUSE</DeckButton>
        <DeckButton $kind="stop">STOP</DeckButton>
      </Deck>
      <RecorderStatus>
        <span>{time}</span>
        <strong>RECORDING</strong>
      </RecorderStatus>
    </Recorder>
  );
}

const MousePointer = ({ left, top }: { left: number; top: number }) => (
  <Pointer $left={left} $top={top} width="8" height="13" viewBox="0 0 8 13" aria-hidden="true">
    <path d="M.5 .5V10L2.800 8L4.500 12L6 11.300L4.500 7.500H7.500Z" fill="#fff" stroke="#222" strokeWidth=".8" />
  </Pointer>
);

export default function App() {
  return (
    <Page>
      <Global />
      <Pair $right={4}>
        <AppWindow title="VibeView" skin="sky" edge={4} bar={18} menu={14} client={206} rec={vibe}>
          <RecorderDialog left={256} top={20} time="00:00:18" />
          <MousePointer left={320} top={72} />
        </AppWindow>
        <AppWindow title="MultiView" skin="night" edge={5} bar={17} menu={13} client={198} rec={multiA} tabs />
      </Pair>
      <Pair $right={1}>
        <AppWindow title="MultiView" skin="sky" edge={4} bar={19} menu={14} client={198} rec={multiB} tabs>
          <RecorderDialog left={279} top={20} time="00:00:12" />
          <MousePointer left={422} top={154} />
        </AppWindow>
        <AppWindow title="MultiView" skin="night" edge={5} bar={14} menu={14} client={199} rec={multiC} tabs />
      </Pair>
    </Page>
  );
}
